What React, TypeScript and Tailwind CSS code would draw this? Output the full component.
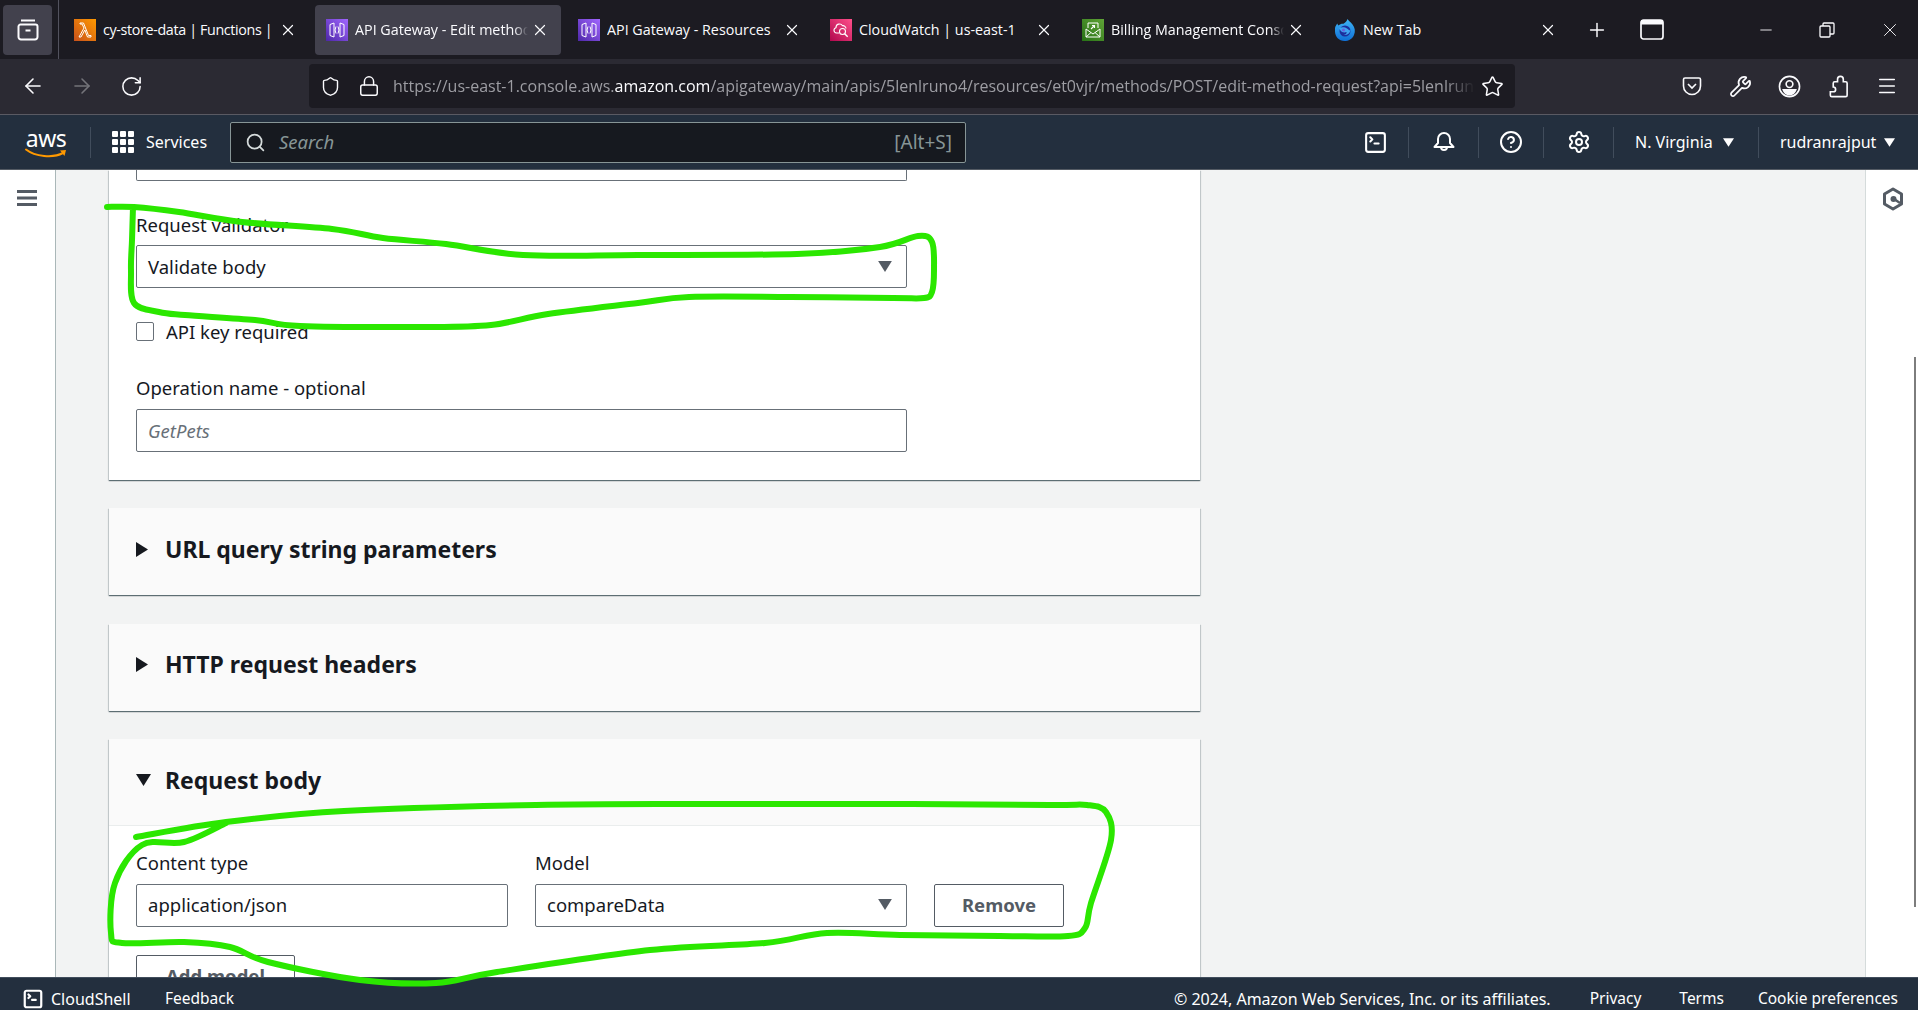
import React from 'react';
import {
  ArrowLeft, ArrowRight, CircleHelp, Lock, Menu, Minus, Plus, RotateCw, Search, Settings, Shield, Star, Wrench, X, SquareTerminal,
} from 'lucide-react';

const FONT = "font-['Noto_Sans',sans-serif]";

// --- tab favicons ---
const LambdaIcon = () => (
  <svg width="22" height="22" viewBox="0 0 22 22">
    <defs><linearGradient id="lam" x1="0" y1="1" x2="1" y2="0"><stop offset="0" stopColor="#c8511b" /><stop offset="1" stopColor="#ff9900" /></linearGradient></defs>
    <rect width="22" height="22" fill="url(#lam)" />
    <path d="M5 18l5-9-2-4H6V4h3.500l5 12.500H17V18h-3.500L10.800 11 7 18z" fill="none" stroke="#fff" strokeWidth="1" strokeLinejoin="round" />
  </svg>
);

const GatewayIcon = () => (
  <svg width="22" height="22" viewBox="0 0 22 22">
    <defs><linearGradient id="gw" x1="0" y1="1" x2="1" y2="0"><stop offset="0" stopColor="#4d27a8" /><stop offset="1" stopColor="#a166ff" /></linearGradient></defs>
    <rect width="22" height="22" fill="url(#gw)" />
    <path d="M8 4L4 5.500v11L8 18zM14 4l4 1.500v11L14 18z" fill="none" stroke="#fff" strokeWidth="1" />
    <path d="M10 7.500L9 11l1 3.500M12 7.500l1 3.500-1 3.500" fill="none" stroke="#fff" strokeWidth="1" />
  </svg>
);

const WatchIcon = () => (
  <svg width="22" height="22" viewBox="0 0 22 22">
    <defs><linearGradient id="cw" x1="0" y1="1" x2="1" y2="0"><stop offset="0" stopColor="#b0084d" /><stop offset="1" stopColor="#ff4f8b" /></linearGradient></defs>
    <rect width="22" height="22" fill="url(#cw)" />
    <path d="M9 14H6.500a2.700 2.700 0 0 1-.5-5.300 3.500 3.500 0 0 1 6.500-2 3 3 0 0 1 3.500 2.800" fill="none" stroke="#fff" strokeWidth="1.100" />
    <circle cx="12.500" cy="12.500" r="3" fill="none" stroke="#fff" strokeWidth="1.100" />
    <path d="M14.700 14.700l3 3" stroke="#fff" strokeWidth="1.400" />
  </svg>
);

const BillingIcon = () => (
  <svg width="22" height="22" viewBox="0 0 22 22">
    <defs><linearGradient id="bl" x1="0" y1="1" x2="1" y2="0"><stop offset="0" stopColor="#277116" /><stop offset="1" stopColor="#60a337" /></linearGradient></defs>
    <rect width="22" height="22" fill="url(#bl)" />
    <path d="M6 9V4h10v5M4 10l7 5 7-5v8H4zM4 18l5-4.500M18 18l-5-4.500" fill="none" stroke="#fff" strokeWidth="1" strokeLinejoin="round" />
    <path d="M9 10l3.500-3.500M10 6.500h2.500V9" fill="none" stroke="#fff" strokeWidth="1.100" />
  </svg>
);

const FirefoxIcon = () => (
  <svg width="22" height="22" viewBox="0 0 22 22">
    <defs><linearGradient id="ff" x1="0" y1="0" x2="0" y2="1"><stop offset="0" stopColor="#3fb5f5" /><stop offset="1" stopColor="#0f6fd6" /></linearGradient></defs>
    <path d="M1 9c.5-2 1.500-3.500 2.500-4.500C3.500 5.500 4 6 4.500 6.500 6 5 8 4.500 9.500 4.800 11.500 3.500 12.800 2 13.500 0c1 2 3 3 5 5.500 2.500 3 3 7 1.500 10.500-1.800 4-5.500 6-9.500 6C5 22 1 17.500 1 12.500z" fill="url(#ff)" />
    <circle cx="11" cy="12" r="5.500" fill="#1c2e9c" />
    <path d="M5 9c2.500-1 6-1 8 .5 1.500 1.200 2.500 2 3.500 2-1 3.500-4 5-7 4.500 2.500-.5 3.500-2 3-3-2 1-5 .5-6-1.500z" fill="#3fa4f0" />
    <circle cx="9.500" cy="11" r="1.500" fill="#6b5fe0" />
  </svg>
);

const tabs = [
  { title: 'cy-store-data | Functions |', icon: <LambdaIcon />, active: false, text: 'tracking-[-0.35px]' },
  { title: 'API Gateway - Edit method request', icon: <GatewayIcon />, active: true, text: '[mask-image:linear-gradient(to_left,transparent,black_14px)]' },
  { title: 'API Gateway - Resources', icon: <GatewayIcon />, active: false, text: '' },
  { title: 'CloudWatch | us-east-1', icon: <WatchIcon />, active: false, text: '' },
  { title: 'Billing Management Console', icon: <BillingIcon />, active: false, text: '[mask-image:linear-gradient(to_left,transparent,black_14px)]' },
  { title: 'New Tab', icon: <FirefoxIcon />, active: false, text: '' },
];

const TabBar = () => (
  <div className="flex h-[59px] shrink-0 items-center bg-[#1c1b22] text-[#fbfbfe]">
    <div className="ml-[3px] flex h-[50px] w-[49px] items-center justify-center rounded-[4px] bg-[#42414d]">
      <svg width="24" height="24" viewBox="0 0 24 24" fill="none" stroke="#fbfbfe" strokeWidth="2">
        <path d="M5 2.500h14M2.500 8.500a2 2 0 0 1 2-2h15a2 2 0 0 1 2 2V19a2.500 2.500 0 0 1-2.500 2.500H5A2.500 2.500 0 0 1 2.500 19zM9.500 12.500h5" />
      </svg>
    </div>
    <div className="ml-[6px] mr-[4px] h-[59px] w-px bg-[#52525e]" />
    <div className="flex gap-[6px]">
      {tabs.map((t) => (
        <div key={t.title} className={`flex h-[50px] w-[246px] items-center pl-[11px] pr-[12px] rounded-[4px] ${t.active ? 'bg-[#42414d]' : ''}`}>
          <span className="shrink-0">{t.icon}</span>
          <span className={`ml-[7px] flex-1 overflow-hidden whitespace-nowrap text-[14.300px] font-['Open_Sans',sans-serif] ${t.text}`}>{t.title}</span>
          <X size={18} strokeWidth={1.6} className="ml-[3px] shrink-0" />
        </div>
      ))}
    </div>
    <Plus size={22} strokeWidth={1.6} className="ml-[17px] shrink-0" />
    <svg width="24" height="22" viewBox="0 0 24 22" fill="none" className="ml-[32px] shrink-0">
      <rect x="1" y="1" width="22" height="19" rx="2.500" stroke="#fbfbfe" strokeWidth="1.700" />
      <rect x="1" y="1" width="22" height="4.500" fill="#fbfbfe" />
    </svg>
    <Minus size={18} strokeWidth={1.2} className="ml-[93px] shrink-0" />
    <svg width="16" height="16" viewBox="0 0 16 16" fill="none" stroke="#fbfbfe" strokeWidth="1.300" className="ml-[44px] shrink-0">
      <rect x="1" y="4" width="10" height="11" rx="1" />
      <path d="M4 4V2a1 1 0 0 1 1-1h9a1 1 0 0 1 1 1v9a1 1 0 0 1-1 1h-3" />
    </svg>
    <X size={22} strokeWidth={1} className="ml-[44px] shrink-0" />
  </div>
);

const ToolBar = () => (
  <div className="flex h-[56px] shrink-0 items-center border-b border-[#5a5a63] bg-[#2b2a33] pb-px text-[#fbfbfe]">
    <ArrowLeft size={24} strokeWidth={1.6} className="ml-[21px] shrink-0" />
    <ArrowRight size={24} strokeWidth={1.6} className="ml-[25px] shrink-0 text-[#74747a]" />
    <RotateCw size={23} strokeWidth={1.6} className="ml-[26px] shrink-0" />
    <div className="ml-[166px] flex h-[44px] w-[1206px] shrink-0 items-center rounded-[4px] bg-[#1c1b22]">
      <Shield size={21} strokeWidth={1.6} className="ml-[11px] shrink-0" />
      <Lock size={22} strokeWidth={1.6} className="ml-[17px] shrink-0" />
      <span className="ml-[13px] w-[1082px] overflow-hidden whitespace-nowrap text-[16px] text-[#9d9da3] font-['Open_Sans',sans-serif] [mask-image:linear-gradient(to_left,transparent,black_30px)]">
        https://us-east-1.console.aws.<span className="text-[#fbfbfe]">amazon.com</span>/apigateway/main/apis/5lenlruno4/resources/et0vjr/methods/POST/edit-method-request?api=5lenlruno4&amp;resource=et0vjr
      </span>
      <Star size={23} strokeWidth={1.6} className="ml-[6px] shrink-0" />
    </div>
    <svg width="20" height="20" viewBox="0 0 20 20" fill="none" stroke="#fbfbfe" strokeWidth="1.600" className="ml-[167px] shrink-0">
      <path d="M3 2h14a1.500 1.500 0 0 1 1.500 1.500V10a8.500 8.500 0 0 1-17 0V3.500A1.500 1.500 0 0 1 3 2zM6 8l4 4 4-4" />
    </svg>
    <Wrench size={23} strokeWidth={1.8} className="ml-[27px] shrink-0" />
    <svg width="23" height="23" viewBox="0 0 24 24" fill="none" stroke="#fbfbfe" strokeWidth="1.700" className="ml-[26px] shrink-0">
      <circle cx="12" cy="12" r="10.500" />
      <circle cx="12" cy="9.500" r="3.500" />
      <path d="M5.500 15.500h13c-1 3-3.500 5-6.500 5s-5.500-2-6.500-5z" fill="#fbfbfe" />
    </svg>
    <svg width="23" height="23" viewBox="0 0 24 24" fill="none" stroke="#fbfbfe" strokeWidth="1.700" className="ml-[26px] shrink-0">
      <path d="M8 7h3V4.500a3 3 0 0 1 6 0V7h2.500A1.500 1.500 0 0 1 21 8.500V21a1.500 1.500 0 0 1-1.500 1.500H5A1.500 1.500 0 0 1 3.500 21v-3.500h3a2.500 2.500 0 0 0 0-5H6.500V8.500A1.500 1.500 0 0 1 8 7z" />
    </svg>
    <Menu size={22} strokeWidth={1.6} className="ml-[26px] shrink-0" />
  </div>
);

const Sep = () => <div className="h-[31px] w-px shrink-0 bg-[#414d5c]" />;

const Caret = () => (
  <svg width="11" height="9" viewBox="0 0 13 10" className="shrink-0"><path d="M0 0h13L6.500 10z" fill="#fff" /></svg>
);

const AwsNav = () => (
  <div className={`flex h-[55px] shrink-0 items-center border-b border-[#545b64] bg-[#232f3e] text-[16px] text-white ${FONT}`}>
    <div className="relative ml-[25px] h-[34px] w-[42px] shrink-0">
      <span className="block text-center text-[23px] leading-[26px] tracking-[-0.5px]">aws</span>
      <svg width="43" height="11" viewBox="0 0 43 11" className="absolute left-0 top-[23px]">
        <path d="M1 1.500C10 8.500 28 10.500 38 5" fill="none" stroke="#ff9900" strokeWidth="2" strokeLinecap="round" />
        <path d="M35 2.500l6-.5-1.500 6z" fill="#ff9900" />
      </svg>
    </div>
    <div className="ml-[23px] h-[31px] w-px shrink-0 bg-[#414d5c]" />
    <div className="ml-[21px] grid shrink-0 grid-cols-3 gap-[2px]">
      {Array.from({ length: 9 }).map((_, i) => (
        <span key={i} className="h-[6px] w-[6px] rounded-[1px] bg-white" />
      ))}
    </div>
    <span className="ml-[12px] w-[62px] shrink-0 whitespace-nowrap">Services</span>
    <div className="ml-[22px] flex h-[41px] w-[736px] shrink-0 items-center rounded-[2px] border border-[#879596] bg-[#16191f]">
      <Search size={21} strokeWidth={2} className="ml-[14px] shrink-0 text-[#d5dbdb]" />
      <span className="ml-[13px] flex-1 text-[18.500px] italic text-[#879596]">Search</span>
      <span className="mr-[13px] text-[19px] text-[#879596]">[Alt+S]</span>
    </div>
    <SquareTerminal size={25} strokeWidth={2} className="ml-[397px] shrink-0" />
    <div className="ml-[20px] flex shrink-0 items-center"><Sep /></div>
    <svg width="24" height="24" viewBox="0 0 24 24" fill="none" stroke="#fff" strokeWidth="2" strokeLinejoin="round" className="ml-[23px] shrink-0">
      <path d="M12 3a6 6 0 0 1 6 6v4l3.500 4h-19L6 13V9a6 6 0 0 1 6-6z" />
      <path d="M9 17a3 3 0 0 0 6 0" />
    </svg>
    <div className="ml-[22px] shrink-0"><Sep /></div>
    <CircleHelp size={24} strokeWidth={2} className="ml-[20px] shrink-0" />
    <div className="ml-[20px] shrink-0"><Sep /></div>
    <Settings size={24} strokeWidth={2} className="ml-[23px] shrink-0" />
    <div className="ml-[22px] shrink-0"><Sep /></div>
    <span className="ml-[21px] w-[80px] shrink-0 whitespace-nowrap">N. Virginia</span>
    <span className="ml-[8px] flex shrink-0"><Caret /></span>
    <div className="ml-[24px] shrink-0"><Sep /></div>
    <span className="ml-[21px] w-[97px] shrink-0 whitespace-nowrap">rudranrajput</span>
    <span className="ml-[7px] flex shrink-0"><Caret /></span>
  </div>
);

const cardClass = 'w-[1091px] shrink-0 shadow-[0_1px_1px_0_rgba(0,28,36,0.5),1px_1px_1px_0_rgba(0,28,36,0.12),-1px_1px_1px_0_rgba(0,28,36,0.12)]';
const boxClass = 'flex h-[43px] shrink-0 items-center rounded-[2px] border border-[#687078] bg-white px-[11px] text-[18.500px] text-[#16191f]';

const SelectCaret = () => (
  <svg width="14" height="11" viewBox="0 0 15 12" className="shrink-0"><path d="M0 0h15L7.500 12z" fill="#545b64" /></svg>
);

const CollapsedHeader = ({ title, pb }: { title: string; pb: string }) => (
  <div className={`${cardClass} flex h-[87px] items-center bg-[#fafafa] pl-[27px] ${pb}`}>
    <svg width="12" height="15" viewBox="0 0 12 15" className="shrink-0"><path d="M0 0l12 7.500L0 15z" fill="#16191f" /></svg>
    <h2 className="ml-[17px] text-[23px] font-bold text-[#16191f]">{title}</h2>
  </div>
);

const Content = () => (
  <div className={`flex min-h-0 flex-1 ${FONT}`}>
    <div className="flex w-[56px] shrink-0 justify-center border-r border-[#aab7b8] bg-white pt-[20px]">
      <svg width="20" height="16" viewBox="0 0 20 16" fill="#545b64" className="mr-[1px]">
        <rect width="20" height="3" />
        <rect y="6.500" width="20" height="3" />
        <rect y="13" width="20" height="3" />
      </svg>
    </div>
    <div className="flex min-w-0 flex-1 flex-col overflow-hidden bg-[#f2f3f3] pl-[53px]">
      {/* first card is scrolled, only the end of the upper input is visible */}
      <div className={`${cardClass} flex flex-col bg-white pl-[27px] pb-[28px] text-[18.500px] text-[#16191f]`}>
        <div className="h-[11px] w-[771px] rounded-b-[2px] border-x border-b border-[#687078]" />
        <label className="mt-[33px] leading-[22px]">Request validator</label>
        <div className={`${boxClass} mt-[9px] w-[771px] justify-between pr-[14px]`}>
          Validate body
          <SelectCaret />
        </div>
        <div className="mt-[34px] flex h-[19px] items-center">
          <span className="h-[19px] w-[18px] rounded-[2px] border border-[#687078]" />
          <span className="ml-[12px]">API key required</span>
        </div>
        <label className="mt-[36px] leading-[22px]">Operation name - optional</label>
        <div className={`${boxClass} mt-[10px] w-[771px] italic text-[#687078]`}>GetPets</div>
      </div>

      <div className="mt-[28px]"><CollapsedHeader title="URL query string parameters" pb="pb-[5px]" /></div>
      <div className="mt-[29px]"><CollapsedHeader title="HTTP request headers" pb="pb-[6px]" /></div>

      <div className={`${cardClass} mt-[28px] bg-white text-[18.500px] text-[#16191f]`}>
        <div className="flex h-[87px] items-center border-b border-[#eaeded] bg-[#fafafa] pb-[4px] pl-[27px]">
          <svg width="15" height="12" viewBox="0 0 15 12" className="shrink-0"><path d="M0 0h15L7.500 12z" fill="#16191f" /></svg>
          <h2 className="ml-[14px] text-[23px] font-bold">Request body</h2>
        </div>
        <div className="flex flex-col pl-[27px] pt-[26px]">
          <div className="flex gap-[27px]">
            <div className="flex w-[372px] flex-col gap-[10px]">
              <label className="leading-[22px]">Content type</label>
              <div className={`${boxClass} pb-[2px]`}>application/json</div>
            </div>
            <div className="flex w-[372px] flex-col gap-[10px]">
              <label className="leading-[22px]">Model</label>
              <div className={`${boxClass} justify-between pb-[2px] pr-[14px]`}>
                compareData
                <SelectCaret />
              </div>
            </div>
            <div className="flex flex-col justify-end">
              <button className="h-[43px] w-[130px] rounded-[2px] border border-[#545b64] pb-[2px] font-bold text-[#545b64]">Remove</button>
            </div>
          </div>
          <button className="mt-[28px] h-[43px] w-[159px] rounded-[2px] border border-[#545b64] pb-[2px] font-bold text-[#545b64]">Add model</button>
        </div>
      </div>
    </div>
    <div className="flex w-[53px] shrink-0 justify-center border-l border-[#d5dbdb] bg-white pt-[17px]">
      <svg width="22" height="24" viewBox="0 0 22 24" fill="none" className="ml-[2px]">
        <path d="M11 2l8.500 5v10L11 22l-8.500-5V7z" stroke="#545b64" strokeWidth="3" strokeLinejoin="round" />
        <circle cx="11.500" cy="12" r="3" fill="#545b64" />
        <path d="M12 12l6 4" stroke="#545b64" strokeWidth="2.500" />
      </svg>
    </div>
  </div>
);

const Footer = () => (
  <div className={`flex h-[33px] shrink-0 items-center border-t border-[#414d5c] bg-[#232f3e] pt-[9px] text-[15.500px] text-white ${FONT}`}>
    <SquareTerminal size={22} strokeWidth={2.4} className="ml-[22px] shrink-0" />
    <span className="ml-[7px] w-[80px] shrink-0 whitespace-nowrap text-[16px]">CloudShell</span>
    <span className="ml-[34px] shrink-0">Feedback</span>
    <span className="ml-auto whitespace-nowrap text-[16px]">© 2024, Amazon Web Services, Inc. or its affiliates.</span>
    <span className="ml-[39px]">Privacy</span>
    <span className="ml-[38px]">Terms</span>
    <span className="ml-[34px] mr-[20px] whitespace-nowrap">Cookie preferences</span>
  </div>
);

// hand-drawn marker strokes, smoothed through their points
const stroke1: number[][] = [[107, 207], [134, 207], [179, 212], [242, 222], [332, 229], [383, 238], [446, 244], [523, 255], [638, 255], [797, 254], [880, 247], [918, 236], [932, 242], [934, 270], [932, 292], [924, 298], [893, 298], [790, 297], [689, 297], [638, 303], [548, 314], [491, 325], [421, 327], [300, 326], [255, 320], [185, 315], [159, 312], [134, 303], [131, 270], [132, 240], [133, 207]];
const stroke2: number[][] = [[136, 837], [226, 822], [344, 811], [536, 805], [700, 804], [900, 804], [1050, 805], [1087, 805], [1106, 812], [1111, 840], [1091, 903], [1085, 928], [1068, 936], [1000, 936], [900, 935], [827, 933], [765, 943], [650, 950], [497, 972], [436, 983], [360, 980], [268, 962], [230, 947], [184, 942], [122, 943], [111, 933], [115, 883], [142, 845], [184, 842], [226, 823]];

const smooth = (p: number[][]) => {
  let d = `M${p[0][0]} ${p[0][1]}`;
  for (let i = 0; i < p.length - 1; i++) {
    const a = p[Math.max(i - 1, 0)];
    const b = p[i];
    const c = p[i + 1];
    const e = p[Math.min(i + 2, p.length - 1)];
    d += `C${b[0] + (c[0] - a[0]) / 6} ${b[1] + (c[1] - a[1]) / 6} ${c[0] - (e[0] - b[0]) / 6} ${c[1] - (e[1] - b[1]) / 6} ${c[0]} ${c[1]}`;
  }
  return d;
};

export default function App() {
  return (
    <div className="relative flex h-screen w-full flex-col overflow-hidden">
      <TabBar />
      <ToolBar />
      <AwsNav />
      <Content />
      <Footer />
      <div className="absolute right-[2px] top-[357px] h-[550px] w-[2px] bg-[#7d7d7d]" />
      <svg className="pointer-events-none absolute left-0 top-0" width="1918" height="1010" fill="none" stroke="#2be700" strokeWidth="6" strokeLinecap="round" strokeLinejoin="round">
        <path d={smooth(stroke1)} />
        <path d={smooth(stroke2)} />
      </svg>
    </div>
  );
}
